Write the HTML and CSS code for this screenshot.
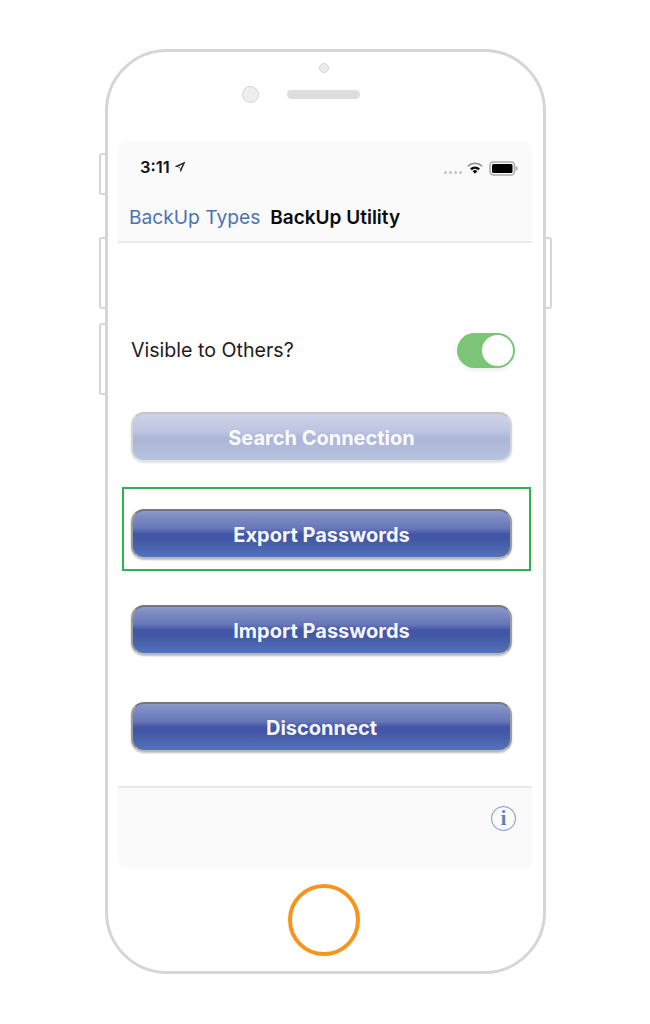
FILE: index.html
```html
<!DOCTYPE html>
<html lang="en">
  <head>
    <meta charset="UTF-8" />
    <title>BackUp Utility</title>
    <link rel="stylesheet" href="styles.css">
  </head>
  <body>
    <div class="phone">
      <span class="side-btn side-mute"></span>
      <span class="side-btn side-vol-up"></span>
      <span class="side-btn side-vol-down"></span>
      <span class="side-btn side-power"></span>

      <div class="phone-top">
        <span class="sensor"></span>
        <div class="camera-row">
          <span class="camera"></span>
          <span class="speaker"></span>
        </div>
      </div>

      <div class="screen">
        <div class="header">
          <div class="status-bar">
            <div class="status-left">
              <span class="time">3:11</span>
              <svg class="location" width="12" height="12" viewBox="0 0 12 12">
                <path d="M11.5 0.5 L0.5 5.4 L5.6 6.4 L6.6 11.5 Z M8.8 3.2 L6.3 8.2 L5.9 6.1 L3.8 5.7 Z" fill="#222" fill-rule="evenodd" />
              </svg>
            </div>
            <div class="status-right">
              <div class="signal"><i></i><i></i><i></i><i></i></div>
              <svg class="wifi" width="16" height="13" viewBox="0 0 16 13">
                <path d="M0.8 4.2 A10.4 10.4 0 0 1 15.2 4.2" fill="none" stroke="#8a8a8a" stroke-width="1.4" />
                <path d="M3 6.6 A7.2 7.2 0 0 1 13 6.6 L11.3 8.3 A4.8 4.8 0 0 0 4.7 8.3 Z" fill="#111" />
                <path d="M5.6 9.2 A3.4 3.4 0 0 1 10.4 9.2 L8 11.8 Z" fill="#111" />
              </svg>
              <svg class="battery" width="29" height="15" viewBox="0 0 29 15">
                <rect x="1" y="1" width="24.5" height="13" rx="3.5" fill="none" stroke="#a9a9a9" stroke-width="1.5" />
                <rect x="3" y="3" width="20.5" height="9" rx="1.5" fill="#000" />
                <rect x="26.5" y="5.5" width="2" height="4" rx="1" fill="#a9a9a9" />
              </svg>
            </div>
          </div>
          <div class="nav-bar">
            <a class="nav-back">BackUp Types</a>
            <span class="nav-title">BackUp Utility</span>
          </div>
        </div>

        <div class="content">
          <div class="visible-row">
            <span class="visible-label">Visible to Others?</span>
            <span class="switch"><span class="knob"></span></span>
          </div>
          <button class="gel-btn first disabled">Search Connection</button>
          <div class="highlight">
            <button class="gel-btn">Export Passwords</button>
          </div>
          <button class="gel-btn import">Import Passwords</button>
          <button class="gel-btn disconnect">Disconnect</button>
        </div>

        <div class="footer">
          <span class="info">i</span>
        </div>
      </div>

      <div class="phone-bottom">
        <span class="home-btn"></span>
      </div>
    </div>
  </body>
</html>
```

FILE: styles.css
```css
body {
  margin: 0;
  background-color: #ffffff;
  font-family: Inter, "Liberation Sans", sans-serif;
}
.phone {
  position: relative;
  box-sizing: border-box;
  width: 441px;
  height: 925px;
  margin: 49px 0 0 105px;
  border: 3px solid #d4d6d8;
  border-radius: 62px;
}
.side-btn {
  position: absolute;
  box-sizing: border-box;
  width: 8px;
  border: 2px solid #d4d6d8;
  border-radius: 3px;
  z-index: -1;
}
.side-mute { left: -9px; top: 101px; height: 42px; }
.side-vol-up { left: -9px; top: 185px; height: 72px; }
.side-vol-down { left: -9px; top: 271px; height: 72px; }
.side-power { right: -9px; top: 185px; height: 72px; }

.phone-top {
  height: 89px;
  box-sizing: border-box;
  padding-top: 11px;
  display: flex;
  flex-direction: column;
  align-items: center;
}
.sensor {
  width: 10px;
  height: 10px;
  box-sizing: border-box;
  margin-right: 4px;
  border: 1px solid #d4d6d8;
  border-radius: 50%;
  background-color: #ececec;
}
.camera-row {
  display: flex;
  align-items: center;
  margin-top: 13px;
  margin-left: -49px;
}
.camera {
  width: 17px;
  height: 17px;
  box-sizing: border-box;
  border: 1px solid #d0d2d4;
  border-radius: 50%;
  background-color: #eeeeee;
}
.speaker {
  width: 73px;
  height: 9px;
  margin-left: 28px;
  border-radius: 5px;
  background-color: #dcdddf;
}

.screen {
  width: 414px;
  height: 727px;
  margin-left: 10px;
  display: flex;
  flex-direction: column;
}
.header {
  height: 102px;
  box-sizing: border-box;
  background-color: #fafafa;
  border-bottom: 2px solid #e9e9eb;
  border-radius: 8px 8px 0 0;
}
.status-bar {
  height: 50px;
  box-sizing: border-box;
  display: flex;
  justify-content: space-between;
  align-items: center;
  padding: 1px 14px 0 22px;
}
.status-left, .status-right {
  display: flex;
  align-items: center;
}
.time {
  font-size: 16.5px;
  font-weight: 600;
  color: #111111;
}
.location {
  margin-left: 4px;
}
.status-right {
  padding-top: 3px;
}
.signal {
  display: flex;
  gap: 2px;
  margin: 8px 5px 0 0;
}
.signal i {
  width: 3px;
  height: 3px;
  border-radius: 50%;
  background-color: #c4c4c4;
}
.wifi {
  margin-right: 6px;
}
.nav-bar {
  display: flex;
  align-items: center;
  height: 50px;
  padding: 2px 0 0 11px;
  box-sizing: border-box;
}
.nav-back {
  font-size: 19.2px;
  color: #4a72b6;
}
.nav-title {
  margin-left: 10px;
  font-size: 19px;
  font-weight: 600;
  color: #0a0a0a;
}

.content {
  height: 543px;
  box-sizing: border-box;
  padding: 90px 19px 0 13px;
  background-color: #ffffff;
}
.visible-row {
  display: flex;
  justify-content: space-between;
  align-items: center;
  height: 35px;
  font-size: 19.6px;
  color: #1c1c1c;
}
.visible-label {
  margin-bottom: 2px;
}
.switch {
  display: block;
  position: relative;
  width: 58px;
  height: 35px;
  border-radius: 18px;
  background-color: #7cc576;
  margin-right: -2px;
  box-shadow: 0 2px 4px rgba(0, 0, 0, 0.08);
}
.knob {
  position: absolute;
  right: 2px;
  top: 2px;
  width: 31px;
  height: 31px;
  border-radius: 50%;
  background-color: #ffffff;
}
.gel-btn {
  display: block;
  width: 381px;
  height: 50px;
  padding: 2px 0 0;
  box-sizing: border-box;
  border: 2px solid #9c9c9c;
  border-top-color: #777777;
  border-bottom-color: #b8b8b8;
  border-radius: 13px;
  background: linear-gradient(#8a97cb 0%, #6676b8 38%, #4156a6 50%, #4156a6 60%, #5373b7 100%);
  box-shadow: 0 1px 2px rgba(0, 0, 0, 0.25);
  font-family: inherit;
  font-size: 20px;
  font-weight: 700;
  color: #f4f6fb;
}
.gel-btn.first {
  margin-top: 44px;
}
.gel-btn.disabled {
  opacity: 0.42;
}
.gel-btn.import {
  margin-top: 34px;
}
.gel-btn.disconnect {
  margin-top: 47px;
}
.highlight {
  box-sizing: border-box;
  width: 409px;
  height: 84px;
  margin: 25px 0 0 -9px;
  padding: 20px 0 0 7px;
  border: 2px solid #2fb254;
}

.footer {
  height: 82px;
  box-sizing: border-box;
  display: flex;
  justify-content: flex-end;
  padding: 18px 16px 0 0;
  background-color: #fafafa;
  border-top: 2px solid #e9e9eb;
  border-radius: 0 0 8px 8px;
}
.info {
  width: 25px;
  height: 25px;
  box-sizing: border-box;
  border: 1.5px solid #6f92cc;
  border-radius: 50%;
  text-align: center;
  font-family: "Liberation Serif", serif;
  font-size: 20px;
  font-weight: 700;
  line-height: 22px;
  color: #5a80bd;
}

.phone-bottom {
  display: flex;
  justify-content: center;
  padding-top: 16px;
}
.home-btn {
  width: 72px;
  height: 72px;
  box-sizing: border-box;
  margin-right: 3px;
  border: 4px solid #f7941d;
  border-radius: 50%;
}
```
